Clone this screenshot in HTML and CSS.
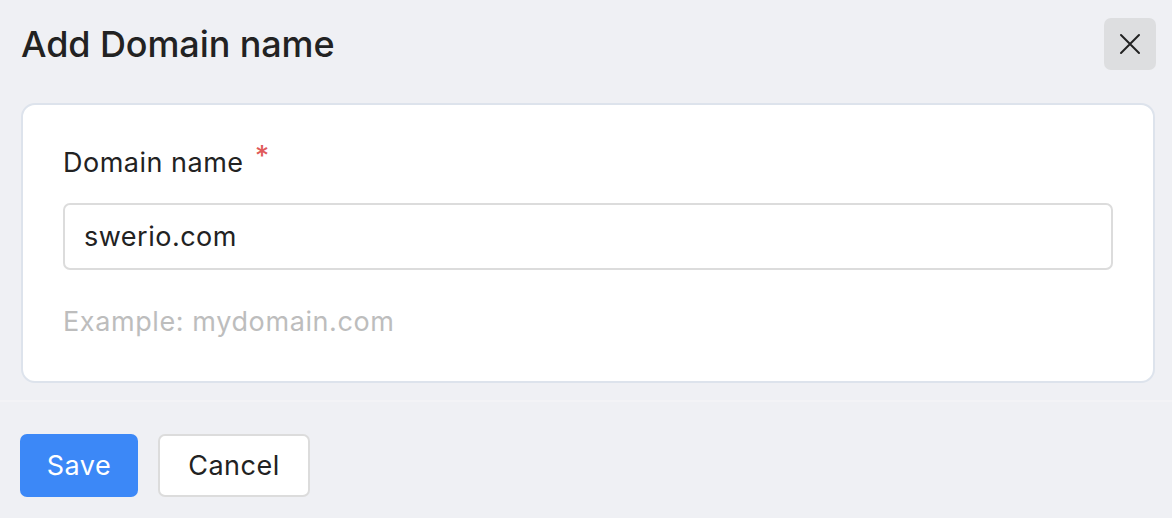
FILE: index.html
```html
<!DOCTYPE html>
<html>
<head>
<meta charset="utf-8">
<link rel="stylesheet" href="styles.css">
</head>
<body>
<div class="dialog">
  <div class="body">
    <div class="header">
      <h1 class="title">Add Domain name</h1>
      <button class="close" aria-label="Close">
        <svg width="22" height="22" viewBox="0 0 22 22"><path d="M2 2L20 20M20 2L2 20" stroke="#222" stroke-width="2" stroke-linecap="round"/></svg>
      </button>
    </div>
    <div class="card">
      <label class="label">Domain name <span class="req">*</span></label>
      <div class="input">swerio.com</div>
      <div class="hint">Example: mydomain.com</div>
    </div>
  </div>
  <div class="footer">
    <button class="btn primary">Save</button>
    <button class="btn secondary">Cancel</button>
  </div>
</div>
</body>
</html>
```
FILE: styles.css
```css
html, body {
  margin: 0;
  padding: 0;
  background: #eff0f4;
  font-family: Inter, "Noto Sans", sans-serif;
  color: #222;
}
.dialog {
  width: 1172px;
  height: 518px;
  display: flex;
  flex-direction: column;
}
.body {
  padding: 18px 16px 17px 21px;
  border-bottom: 2px solid #f3f3f6;
}
.header {
  display: flex;
  justify-content: space-between;
  align-items: center;
  height: 52px;
}
.title {
  margin: 0;
  font-size: 36px;
  font-weight: 500;
  letter-spacing: -0.1px;
  color: #222;
}
.close {
  width: 52px;
  height: 52px;
  border: none;
  border-radius: 7px;
  background: #dddee0;
  display: flex;
  align-items: center;
  justify-content: center;
  padding: 0;
}
.card {
  margin-top: 33px;
  margin-right: 1px;
  background: #fff;
  border: 2px solid #dde3ec;
  border-radius: 14px;
  padding: 42px 40px 0 40px;
  height: 234px;
  box-sizing: content-box;
}
.label {
  display: block;
  font-size: 27px;
  letter-spacing: 0.5px;
  color: #222;
  line-height: 32px;
}
.req {
  color: #e05a5a;
  font-size: 28px;
  font-weight: 500;
  vertical-align: top;
  position: relative;
  top: -7px;
  margin-left: 3px;
}
.input {
  margin-top: 24px;
  height: 63px;
  border: 2px solid #dcdcdc;
  border-radius: 7px;
  padding: 0 19px;
  display: flex;
  align-items: center;
  font-size: 27px;
  letter-spacing: 0.5px;
  color: #222;
}
.hint {
  margin-top: 36px;
  font-size: 27px;
  line-height: 32px;
  letter-spacing: 0.6px;
  color: #bdbdbd;
}
.footer {
  flex: 1;
  display: flex;
  align-items: flex-start;
  padding: 32px 20px 0;
  gap: 20px;
}
.btn {
  height: 63px;
  border-radius: 7px;
  font-family: Inter, "Noto Sans", sans-serif;
  font-size: 27px;
  letter-spacing: 0.5px;
  padding: 0;
  cursor: pointer;
}
.primary {
  width: 118px;
  background: #3c88f7;
  color: #fff;
  border: none;
}
.secondary {
  width: 152px;
  background: #fff;
  color: #222;
  border: 2px solid #dcdcdc;
}
```
